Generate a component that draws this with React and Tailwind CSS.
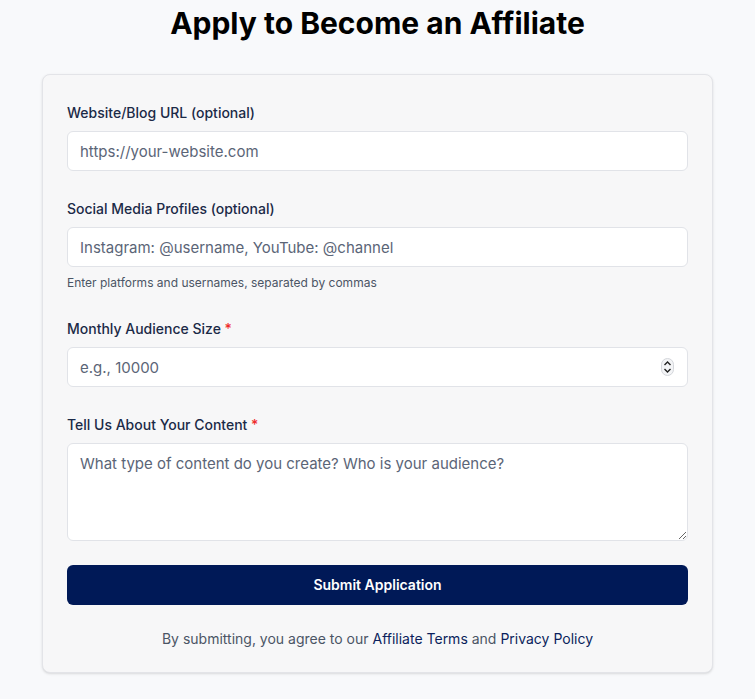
import { useState } from "react";

const inter = { fontFamily: "Inter, 'Noto Sans', sans-serif" };

const Label = ({ children, required }) => (
	<label className="block text-sm leading-[21px] font-medium text-[#1b2a47] mb-2">
		{children}
		{required && <span className="text-[#ef2b2b]"> *</span>}
	</label>
);

const inputCls =
	"w-full h-10 px-3 rounded-md border border-[#e1e3e8] bg-white text-[15px] text-[#1b2a47] placeholder:text-[#5b6577] outline-none";

// little up/down stepper shown at the right of the number field
const Stepper = () => (
	<div className="absolute right-[14px] top-[11px] w-[13px] h-[18px] rounded-full border border-[#d4d6db] bg-[#f3f4f6] flex flex-col items-center justify-center pointer-events-none">
		<svg width="9" height="14" viewBox="0 0 9 14" fill="none" stroke="#222" strokeWidth="1.4">
			<path d="M1.5 5 L4.5 2 L7.5 5" />
			<path d="M1.5 9 L4.5 12 L7.5 9" />
		</svg>
	</div>
);

export default function App() {
	const [form, setForm] = useState({ site: "", social: "", size: "", about: "" });
	const set = (k) => (e) => setForm({ ...form, [k]: e.target.value });

	return (
		<div className="min-h-[699px] bg-[#f8f9fb] pt-[5px] pb-6" style={inter}>
			<h1 className="text-center text-[30px] leading-9 font-bold text-black">
				Apply to Become an Affiliate
			</h1>

			<div className="mx-[42px] mt-[33px] rounded-lg border border-[#e3e4e8] bg-[#f7f7f8] shadow-sm px-6 pt-[27px] pb-[23px]">
				<form className="flex flex-col" onSubmit={(e) => e.preventDefault()}>
					{/* Website */}
					<div>
						<Label>Website/Blog URL (optional)</Label>
						<input
							className={inputCls}
							placeholder="https://your-website.com"
							value={form.site}
							onChange={set("site")}
						/>
					</div>

					{/* Social */}
					<div className="mt-[27px]">
						<Label>Social Media Profiles (optional)</Label>
						<input
							className={inputCls}
							placeholder="Instagram: @username, YouTube: @channel"
							value={form.social}
							onChange={set("social")}
						/>
						<p className="mt-2 text-xs leading-4 text-[#4b5565]">
							Enter platforms and usernames, separated by commas
						</p>
					</div>

					{/* Audience */}
					<div className="mt-[27px]">
						<Label required>Monthly Audience Size</Label>
						<div className="relative">
							<input
								type="text"
								inputMode="numeric"
								className={inputCls}
								placeholder="e.g., 10000"
								value={form.size}
								onChange={set("size")}
							/>
							<Stepper />
						</div>
					</div>

					{/* Content */}
					<div className="mt-[27px]">
						<Label required>Tell Us About Your Content</Label>
						<textarea
							className="block w-full h-[98px] px-3 py-2 rounded-md border border-[#e1e3e8] bg-white text-[15px] leading-6 text-[#1b2a47] placeholder:text-[#5b6577] outline-none"
							placeholder="What type of content do you create? Who is your audience?"
							value={form.about}
							onChange={set("about")}
						/>
					</div>

					<button
						type="submit"
						className="mt-6 h-10 w-full rounded-md bg-[#001957] text-white text-sm font-semibold"
					>
						Submit Application
					</button>

					<p className="mt-[24px] text-center text-sm leading-5 text-[#4b5565]">
						By submitting, you agree to our{" "}
						<a href="#" className="text-[#0b1f5c]">Affiliate Terms</a> and{" "}
						<a href="#" className="text-[#0b1f5c]">Privacy Policy</a>
					</p>
				</form>
			</div>
		</div>
	);
}
